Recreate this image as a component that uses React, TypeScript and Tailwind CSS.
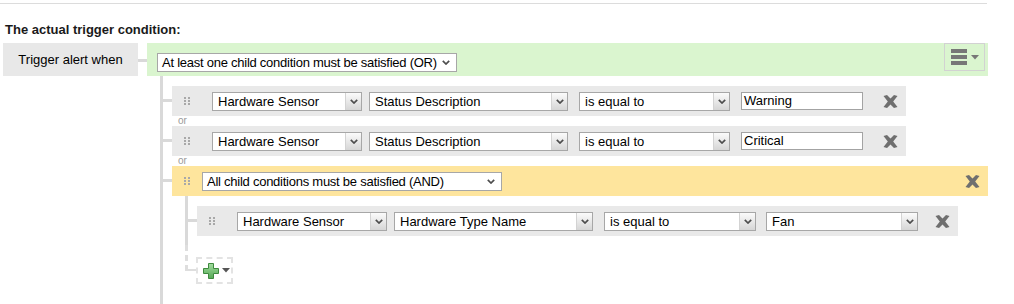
import React from "react";

function Handle() {
  return (
    <div className="grid grid-cols-[2px_2px] gap-x-[2px] gap-y-[1px] shrink-0">
      {[0, 1, 2, 3, 4, 5].map((i) => (
        <div key={i} className="w-[2px] h-[2px] bg-[#a8a8a8]" />
      ))}
    </div>
  );
}

function Chevron() {
  return (
    <svg width="8" height="5" viewBox="0 0 8 5">
      <path d="M0.8 0.8 L4 4 L7.2 0.8" fill="none" stroke="#4d4d4d" strokeWidth="1.7" />
    </svg>
  );
}

function Select({ cls, text }: { cls: string; text: string }) {
  return (
    <div className={`${cls} h-[19px] shrink-0 flex border border-[#a7a7a7] bg-white`}>
      <div className="flex-1 min-w-0 pl-[5px] text-[13px] leading-[17px] text-black whitespace-nowrap overflow-hidden">
        {text}
      </div>
      <div className="w-[16px] flex items-center justify-center border-l border-[#d3d3d3] bg-linear-to-b from-[#fbfbfb] to-[#d6d6d6]">
        <Chevron />
      </div>
    </div>
  );
}

function PlainSelect({ cls, text }: { cls: string; text: string }) {
  return (
    <div className={`${cls} h-[19px] shrink-0 flex items-center border border-[#a7a7a7] bg-white`}>
      <div className="flex-1 min-w-0 pl-[4px] text-[13px] leading-[17px] tracking-[-0.25px] text-black whitespace-nowrap overflow-hidden">
        {text}
      </div>
      <div className="pr-[6px] flex items-center">
        <Chevron />
      </div>
    </div>
  );
}

function TextInput({ cls, value }: { cls: string; value: string }) {
  return (
    <div className={`${cls} h-[18px] shrink-0 border border-[#a3a3a3] bg-white pl-[2px] text-[13px] leading-[16px] text-black`}>
      {value}
    </div>
  );
}

function XIcon({ cls }: { cls: string }) {
  return (
    <svg className={`${cls} shrink-0`} width="15" height="13" viewBox="0 0 15 13">
      <path
        d="M0.5 1 L4 0 L7.5 3.6 L11 0 L14.5 1 L10.2 6.5 L14.5 12 L11 13 L7.5 9.4 L4 13 L0.5 12 L4.8 6.5 Z"
        fill="#6f6f6f"
      />
    </svg>
  );
}

function Connector() {
  return <div className="w-[9px] h-[3px] mt-[13px] shrink-0 bg-[#d9d9d9]" />;
}

function Or() {
  return <div className="h-[10px] pl-[15px] text-[10px] leading-[10px] text-[#9a9a9a]">or</div>;
}

function ConditionRow({ value }: { value: string }) {
  return (
    <div className="w-[734px] h-[30px] bg-[#e9e9e9] flex items-center pl-[12px]">
      <Handle />
      <Select cls="ml-[22px] w-[150px]" text="Hardware Sensor" />
      <Select cls="ml-[7px] w-[199px]" text="Status Description" />
      <Select cls="ml-[11px] w-[151px]" text="is equal to" />
      <TextInput cls="ml-[11px] w-[122px]" value={value} />
      <XIcon cls="ml-[20px]" />
    </div>
  );
}

function NestedRow() {
  return (
    <div className="w-[761px] h-[30px] bg-[#e9e9e9] flex items-center pl-[12px]">
      <Handle />
      <Select cls="ml-[22px] w-[150px]" text="Hardware Sensor" />
      <Select cls="ml-[7px] w-[199px]" text="Hardware Type Name" />
      <Select cls="ml-[11px] w-[152px]" text="is equal to" />
      <Select cls="ml-[10px] w-[152px]" text="Fan" />
      <XIcon cls="ml-[17px]" />
    </div>
  );
}

function PlusIcon() {
  return (
    <svg width="16" height="16" viewBox="0 0 16 16">
      <defs>
        <linearGradient id="pg" x1="0" y1="0" x2="0" y2="1">
          <stop offset="0" stopColor="#a3dca0" />
          <stop offset="1" stopColor="#55a955" />
        </linearGradient>
      </defs>
      <path
        d="M5.5 0.5 H10.5 V5.5 H15.5 V10.5 H10.5 V15.5 H5.5 V10.5 H0.5 V5.5 H5.5 Z"
        fill="url(#pg)"
        stroke="#3e8a3e"
        strokeWidth="1"
      />
    </svg>
  );
}

function YellowGroup() {
  return (
    <div className="flex flex-col w-[816px]">
      <div className="h-[30px] bg-[#fee59d] flex items-center pl-[12px] pr-[8px]">
        <Handle />
        <PlainSelect cls="ml-[12px] w-[300px]" text="All child conditions must be satisfied (AND)" />
        <div className="flex-1" />
        <XIcon cls="" />
      </div>
      <div className="ml-[13px] border-l-[3px] border-[#d9d9d9] pt-[10px] pb-[9px]">
        <div className="flex">
          <Connector />
          <NestedRow />
        </div>
      </div>
      <div className="flex items-start">
        <div className="ml-[13px] w-[11px] h-[26px] border-l-[3px] border-b-2 border-dashed border-[#dedede]" />
        <div className="mt-[12px] w-[37px] h-[27px] border-2 border-dashed border-[#e3e3e3] flex items-center pl-[5px]">
          <PlusIcon />
          <svg className="ml-[3px]" width="8" height="5" viewBox="0 0 8 5">
            <path d="M0 0 H8 L4 4.5 Z" fill="#555" />
          </svg>
        </div>
      </div>
    </div>
  );
}

export default function App() {
  return (
    <div className="font-['Liberation_Sans',Arial,sans-serif] text-black bg-white w-[1014px] h-[304px] overflow-hidden">
      <div className="mt-[3px] w-[987px] h-px bg-[#dcdcdc]" />
      <div className="mt-[18px] ml-[5px] text-[13px] leading-[15px] font-bold text-[#1a1a1a]">
        The actual trigger condition:
      </div>
      <div className="mt-[6px] flex items-start">
        <div className="ml-[3px] w-[135px] h-[33px] bg-[#e8e8e8] flex items-center justify-center text-[13px] leading-[15px]">
          Trigger alert when
        </div>
        <div className="w-[9px] h-[3px] mt-[16px] bg-[#d9d9d9]" />
        <div className="flex flex-col w-[841px]">
          <div className="h-[33px] bg-[#daf5cf] flex items-start pl-[10px] pr-[3px]">
            <PlainSelect cls="mt-[10px] w-[300px]" text="At least one child condition must be satisfied (OR)" />
            <div className="flex-1" />
            <div className="w-[41px] h-[28px] border border-[#d2d2d2] flex items-center pl-[6px]">
              <div className="flex flex-col gap-[2px]">
                <div className="w-[16px] h-[4px] bg-[#777]" />
                <div className="w-[16px] h-[4px] bg-[#777]" />
                <div className="w-[16px] h-[4px] bg-[#777]" />
              </div>
              <svg className="ml-[4px]" width="8" height="5" viewBox="0 0 8 5">
                <path d="M0 0 H8 L4 4.5 Z" fill="#777" />
              </svg>
            </div>
          </div>
          <div className="ml-[13px] border-l-[3px] border-[#d9d9d9] pt-[10px] pb-[60px] flex flex-col">
            <div className="flex">
              <Connector />
              <ConditionRow value="Warning" />
            </div>
            <Or />
            <div className="flex">
              <Connector />
              <ConditionRow value="Critical" />
            </div>
            <Or />
            <div className="flex">
              <Connector />
              <YellowGroup />
            </div>
          </div>
        </div>
      </div>
    </div>
  );
}
